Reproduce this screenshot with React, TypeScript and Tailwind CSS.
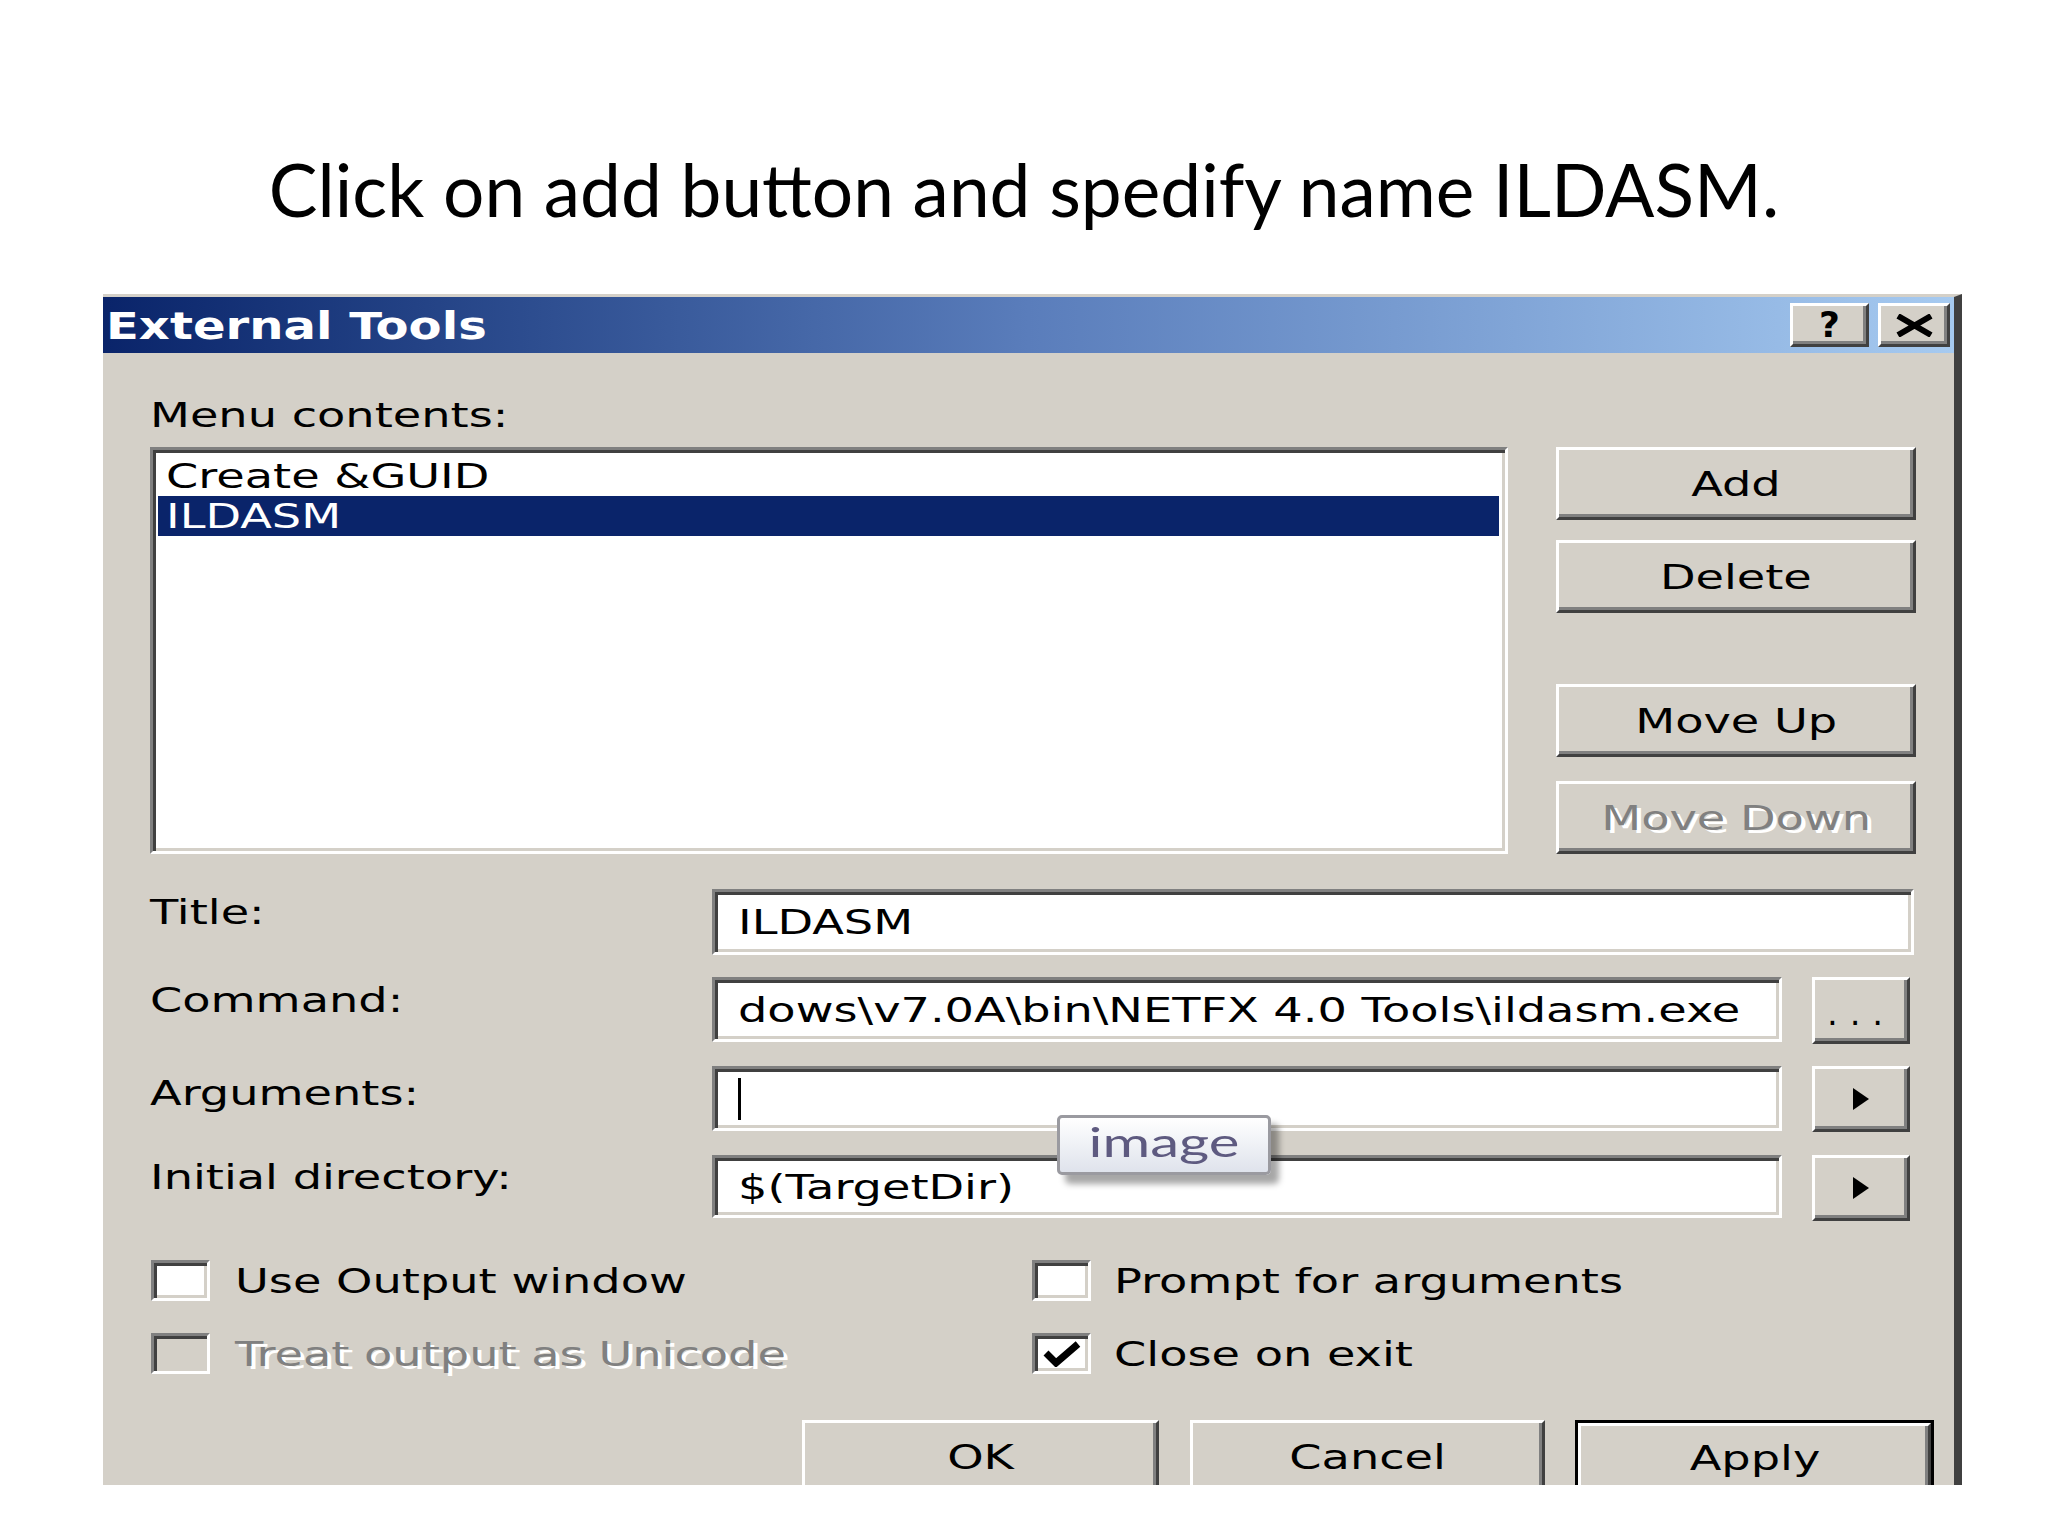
import type { ReactNode } from 'react'

const dlgFont = "font-['DejaVu_Sans',sans-serif] text-[34px] leading-[34px] text-black"
const raised =
  'border-[3px] border-t-white border-l-white border-r-[#404040] border-b-[#404040] bg-[#d4d0c8] shadow-[inset_-3px_-3px_0_#808080]'
const sunken =
  'border-[3px] border-t-[#808080] border-l-[#808080] border-r-white border-b-white shadow-[inset_3px_3px_0_#404040,inset_-3px_-3px_0_#d4d0c8]'
const grayed = 'text-[#808080] [text-shadow:3px_3px_0_#ffffff]'

// the old dialog was stretched sideways, so the text is too
const W = ({ children, center, className = '' }: { children: ReactNode; center?: boolean; className?: string }) => (
  <span className={`inline-block whitespace-nowrap scale-x-[1.36] ${center ? 'origin-center' : 'origin-left'} ${className}`}>
    {children}
  </span>
)

const Button = ({ children, className, disabled }: { children: ReactNode; className: string; disabled?: boolean }) => (
  <div className={`${raised} ${className} flex items-center justify-center`}>
    <W center className={disabled ? grayed : ''}>
      {children}
    </W>
  </div>
)

const Arrow = () => (
  <svg width="20" height="22" viewBox="0 0 20 22">
    <polygon points="2,0 18,11 2,22" fill="#000" />
  </svg>
)

const Checkbox = ({ checked, disabled }: { checked?: boolean; disabled?: boolean }) => (
  <div
    className={`${sunken} flex h-[41px] w-[59px] shrink-0 items-center justify-center ${disabled ? 'bg-[#d4d0c8]' : 'bg-white'}`}
  >
    {checked && (
      <svg width="40" height="26" viewBox="0 0 40 26" preserveAspectRatio="none">
        <polyline points="4,12 14,22 36,3" fill="none" stroke="#000" strokeWidth="7" />
      </svg>
    )}
  </div>
)

const Field = ({ value, className, caret }: { value?: string; className: string; caret?: boolean }) => (
  <div className={`${sunken} ${className} flex items-center overflow-hidden whitespace-nowrap bg-white pl-[23px]`}>
    {value && <W>{value}</W>}
    {caret && <span className="h-[42px] w-[3px] bg-black" />}
  </div>
)

export default function App() {
  return (
    <div className="relative h-[1536px] w-[2048px] overflow-hidden bg-white">
      <div className="h-[294px] pt-[153px] text-center font-['Lato','Open_Sans',sans-serif] text-[73px] leading-none text-black">
        Click on add button and spedify name ILDASM.
      </div>

      <div className={`relative ml-[103px] h-[1191px] w-[1859px] overflow-hidden border-t-[3px] border-r-[8px] border-t-[#d4d0c8] border-r-[#404040] bg-[#d4d0c8] ${dlgFont}`}>
        {/* title bar */}
        <div className="flex h-[56px] items-start bg-linear-to-r from-[#0a246a] via-[#5a7dbb] to-[#a6caf0] pr-[4px]">
          <div className="mt-[11px] flex-1 pl-[3px] text-[37px] leading-[37px] font-bold text-white">
            <span className="inline-block origin-left scale-x-[1.3]">External Tools</span>
          </div>
          <div className={`${raised} mt-[6px] flex h-[44px] w-[79px] items-center justify-center text-[36px] font-bold`}>
            ?
          </div>
          <div className={`${raised} mt-[6px] ml-[9px] flex h-[44px] w-[72px] items-center justify-center`}>
            <svg width="39" height="23" viewBox="0 0 39 23">
              <path d="M3 2 L36 21 M36 2 L3 21" stroke="#000" strokeWidth="6" />
            </svg>
          </div>
        </div>

        <div className="pl-[47px]">
          <div className="mt-[45px] h-[34px]">
            <W>Menu contents:</W>
          </div>

          <div className="mt-[15px] flex">
            <div className={`${sunken} h-[407px] w-[1358px] bg-white pt-[6px] pr-[6px] pl-[5px]`}>
              <div className="flex h-[40px] items-center pl-[8px]">
                <W>Create &amp;GUID</W>
              </div>
              <div className="flex h-[40px] items-center bg-[#0a246a] pl-[8px] text-white">
                <W>ILDASM</W>
              </div>
            </div>
            <div className="ml-[48px] flex w-[360px] flex-col">
              <Button className="h-[73px]">Add</Button>
              <Button className="mt-[20px] h-[73px]">Delete</Button>
              <Button className="mt-[71px] h-[73px]">Move Up</Button>
              <Button className="mt-[24px] h-[73px]" disabled>
                Move Down
              </Button>
            </div>
          </div>

          <div className="mt-[35px] flex h-[66px] items-start">
            <div className="w-[562px] pt-[6px]">
              <W>Title:</W>
            </div>
            <Field value="ILDASM" className="h-[66px] w-[1202px]" />
          </div>

          <div className="mt-[22px] flex h-[66px] items-start">
            <div className="w-[562px] pt-[6px]">
              <W>Command:</W>
            </div>
            <Field value="dows\v7.0A\bin\NETFX 4.0 Tools\ildasm.exe" className="h-[65px] w-[1070px]" />
            <div className={`${raised} ml-[30px] flex h-[67px] w-[98px] items-center justify-center pt-[4px] tracking-[0.35em]`}>
              ...
            </div>
          </div>

          <div className="mt-[23px] flex h-[66px] items-start">
            <div className="w-[562px] pt-[10px]">
              <W>Arguments:</W>
            </div>
            <Field caret className="h-[65px] w-[1070px]" />
            <div className={`${raised} ml-[30px] flex h-[66px] w-[98px] items-center justify-center`}>
              <Arrow />
            </div>
          </div>

          <div className="mt-[23px] flex h-[66px] items-start">
            <div className="w-[562px] pt-[5px]">
              <W>Initial directory:</W>
            </div>
            <Field value="$(TargetDir)" className="h-[63px] w-[1070px]" />
            <div className={`${raised} ml-[30px] flex h-[66px] w-[98px] items-center justify-center`}>
              <Arrow />
            </div>
          </div>

          <div className="mt-[39px] grid grid-cols-[881px_1fr] gap-y-[32px]">
            <div className="flex h-[41px] items-center gap-[25px] pl-[1px]">
              <Checkbox />
              <W>Use Output window</W>
            </div>
            <div className="flex h-[41px] items-center gap-[23px] pl-[1px]">
              <Checkbox />
              <W>Prompt for arguments</W>
            </div>
            <div className="flex h-[41px] items-center gap-[25px] pl-[1px]">
              <Checkbox disabled />
              <W className={grayed}>Treat output as Unicode</W>
            </div>
            <div className="flex h-[41px] items-center gap-[23px] pl-[1px]">
              <Checkbox checked />
              <W>Close on exit</W>
            </div>
          </div>
        </div>

        <div className="mt-[46px] flex pl-[699px]">
          <Button className="h-[73px] w-[357px]">OK</Button>
          <Button className="ml-[31px] h-[73px] w-[355px]">Cancel</Button>
          <div className="ml-[30px] h-[76px] w-[359px] border-[3px] border-black">
            <Button className="h-full w-full">Apply</Button>
          </div>
        </div>

        <div className="absolute top-[818px] left-[954px] flex h-[60px] w-[214px] items-center justify-center rounded-[5px] border-[3px] border-[#9a9aa0] bg-linear-to-b from-white to-[#dfe3ec] font-['Lato',sans-serif] text-[40px] leading-none text-[#5e5a80] shadow-[8px_9px_6px_rgba(0,0,0,0.35)]">
          <span className="-mt-[6px] inline-block scale-x-[1.45]">image</span>
        </div>
      </div>
    </div>
  )
}
